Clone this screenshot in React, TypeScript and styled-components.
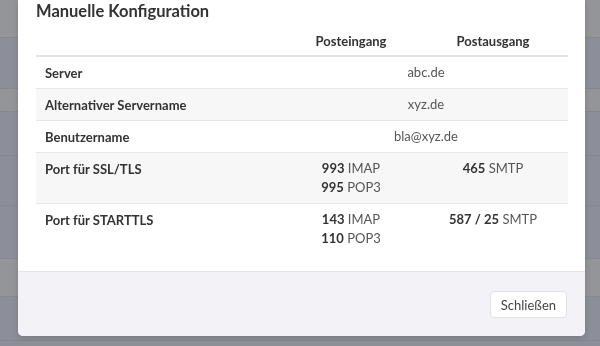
import styled, { createGlobalStyle } from "styled-components";

const GlobalStyle = createGlobalStyle`
  html, body {
    margin: 0;
    padding: 0;
    width: 600px;
    height: 346px;
    overflow: hidden;
    font-family: Lato, "Liberation Sans", sans-serif;
  }
  *, *::before, *::after {
    box-sizing: border-box;
  }
`;

const Page = styled.div`
  width: 600px;
  height: 346px;
  display: flex;
  flex-direction: column;
  background-color: #8c8f99;
`;

const PageRow = styled.div<{ $h: number; $light?: boolean }>`
  height: ${(props) => props.$h}px;
  flex-shrink: 0;
  background-color: ${(props) => (props.$light ? "#949598" : "#8c8f99")};
  border-bottom: 1px solid #868890;
`;

const Overlay = styled.div`
  position: fixed;
  inset: 0;
  display: flex;
  align-items: flex-end;
  justify-content: center;
  padding-bottom: 10px;
`;

const Modal = styled.div`
  width: 567px;
  margin-left: 3px;
  background-color: #fff;
  border-radius: 0 0 5px 5px;
  box-shadow: 0 2px 6px rgba(0, 0, 0, 0.15);
  overflow: hidden;
`;

const Header = styled.div`
  padding: 0 18px;
`;

const Title = styled.h3`
  margin: 0;
  font-size: 16.5px;
  line-height: 22px;
  font-weight: 700;
  color: #333;
`;

const Body = styled.div`
  padding: 5px 17px 17px 18px;
`;

const Table = styled.table`
  width: 532px;
  border-collapse: collapse;
  table-layout: fixed;
  font-size: 13px;
  color: #555;
`;

const Th = styled.th<{ $w: number }>`
  width: ${(props) => props.$w}px;
  padding: 5px 9px 4px;
  line-height: 19px;
  font-weight: 700;
  color: #333;
  text-align: center;
  border-bottom: 2px solid #e2e2e4;
`;

const Row = styled.tr<{ $striped?: boolean }>`
  background-color: ${(props) => (props.$striped ? "#f7f7f7" : "#fff")};
  border-top: 1px solid #e6e6e8;
`;

const Label = styled.td`
  padding: 6px 9px 5px;
  line-height: 20px;
  font-weight: 700;
  color: #333;
  vertical-align: top;
`;

const Value = styled.td`
  padding: 6px 9px 6px;
  line-height: 19px;
  text-align: center;
  vertical-align: top;
`;

const Num = styled.b`
  font-weight: 700;
  color: #333;
`;

const Footer = styled.div`
  display: flex;
  justify-content: flex-end;
  padding: 19px 18px 18px;
  background-color: #f2f2f7;
  border-top: 1px solid #e4e4e8;
`;

const Button = styled.button`
  height: 27px;
  padding: 0 10px;
  font-family: inherit;
  font-size: 13px;
  color: #444;
  background-color: #fff;
  border: 1px solid #e2e2e6;
  border-radius: 4px;
`;

const Port = ({ n, p }: { n: string; p: string }) => (
  <div>
    <Num>{n}</Num> {p}
  </div>
);

const App = () => {
  return (
    <>
      <GlobalStyle />
      <Page>
        <PageRow $h={38} $light />
        <PageRow $h={51} />
        <PageRow $h={23} $light />
        <PageRow $h={44} />
        <PageRow $h={50} />
        <PageRow $h={53} />
        <PageRow $h={38} $light />
        <PageRow $h={44} />
      </Page>
      <Overlay>
        <Modal>
          <Header>
            <Title>Manuelle Konfiguration</Title>
          </Header>
          <Body>
            <Table>
              <thead>
                <tr>
                  <Th $w={248}></Th>
                  <Th $w={134}>Posteingang</Th>
                  <Th $w={150}>Postausgang</Th>
                </tr>
              </thead>
              <tbody>
                <Row>
                  <Label>Server</Label>
                  <Value colSpan={2}>abc.de</Value>
                </Row>
                <Row $striped>
                  <Label>Alternativer Servername</Label>
                  <Value colSpan={2}>xyz.de</Value>
                </Row>
                <Row>
                  <Label>Benutzername</Label>
                  <Value colSpan={2}>bla@xyz.de</Value>
                </Row>
                <Row $striped>
                  <Label>Port für SSL/TLS</Label>
                  <Value>
                    <Port n="993" p="IMAP" />
                    <Port n="995" p="POP3" />
                  </Value>
                  <Value>
                    <Port n="465" p="SMTP" />
                  </Value>
                </Row>
                <Row>
                  <Label>Port für STARTTLS</Label>
                  <Value>
                    <Port n="143" p="IMAP" />
                    <Port n="110" p="POP3" />
                  </Value>
                  <Value>
                    <Port n="587 / 25" p="SMTP" />
                  </Value>
                </Row>
              </tbody>
            </Table>
          </Body>
          <Footer>
            <Button>Schließen</Button>
          </Footer>
        </Modal>
      </Overlay>
    </>
  );
};

export default App;
